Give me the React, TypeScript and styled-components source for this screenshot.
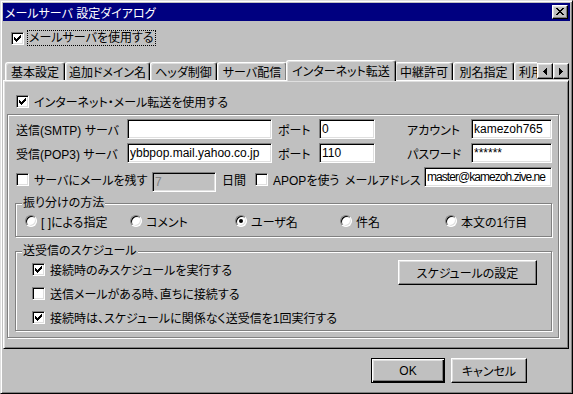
import React from 'react';
import styled, { createGlobalStyle, css } from 'styled-components';

const GlobalStyle = createGlobalStyle`
  html, body {
    margin: 0;
    padding: 0;
    background: #c0c0c0;
    overflow: hidden;
  }
  body {
    font-family: "Liberation Sans", "Noto Sans CJK JP", sans-serif;
    font-size: 12px;
    font-feature-settings: "palt";
    color: #000;
  }
  * {
    box-sizing: border-box;
  }
`;

const raised = css`
  background: #c0c0c0;
  border: 1px solid;
  border-color: #fff #000 #000 #fff;
  box-shadow: inset -1px -1px #808080, inset 1px 1px #dfdfdf;
`;

const Window = styled.div`
  width: 573px;
  height: 394px;
  background: #c0c0c0;
  border: 1px solid;
  border-color: #dfdfdf #000 #000 #dfdfdf;
  box-shadow: inset 1px 1px #fff, inset -1px -1px #808080;
  padding: 2px;
  display: flex;
  flex-direction: column;
`;

const TitleBar = styled.div`
  height: 18px;
  flex: none;
  background: #000080;
  color: #fff;
  display: flex;
  align-items: center;
  justify-content: space-between;
  padding: 0 2px 0 2px;
  white-space: nowrap;
`;

const CloseButton = styled.div`
  ${raised};
  width: 16px;
  height: 14px;
  display: flex;
  align-items: center;
  justify-content: center;
  padding-bottom: 1px;
`;

const TopRow = styled.div`
  display: flex;
  align-items: center;
  height: 14px;
  margin: 10px 0 0 8px;
`;

const FocusLabel = styled.span`
  outline: 1px dotted #000;
  outline-offset: 0;
  margin-left: 4px;
  padding: 0 1px;
  line-height: 14px;
`;

const TabStrip = styled.div`
  position: relative;
  z-index: 1;
  display: flex;
  align-items: flex-end;
  height: 20px;
  margin: 15px 1px 0 0;
  padding-left: 2px;
`;

const TabList = styled.div`
  flex: 1;
  min-width: 0;
  height: 100%;
  display: flex;
  align-items: flex-end;
  overflow-x: clip;
  overflow-y: visible;
`;

const Tab = styled.div<{ $w: number; $active?: boolean }>`
  position: relative;
  flex: none;
  width: ${(p) => p.$w}px;
  height: 18px;
  background: #c0c0c0;
  border-top: 1px solid #fff;
  border-left: 1px solid #fff;
  border-right: 1px solid #000;
  border-radius: 3px 3px 0 0;
  box-shadow: inset -1px 0 #808080, inset 1px 1px #dfdfdf;
  display: flex;
  align-items: center;
  justify-content: center;
  white-space: nowrap;
  overflow: hidden;
  ${(p) => p.$active && css`
    z-index: 2;
    height: 21px;
    margin: 0 -1px -1px;
    padding-bottom: 2px;
  `}
`;

const ScrollArrows = styled.div`
  display: flex;
  align-self: flex-start;
  margin-top: 3px;
  flex: none;
`;

const ArrowButton = styled.div`
  ${raised};
  width: 16px;
  height: 16px;
  display: flex;
  align-items: center;
  justify-content: center;
`;

const Panel = styled.div`
  flex: none;
  height: 269px;
  margin-right: 1px;
  border: 1px solid;
  border-color: #fff #000 #000 #fff;
  box-shadow: inset 1px 1px #dfdfdf, inset -1px -1px #808080;
  padding: 13px 9px 0 3px;
  display: flex;
  flex-direction: column;
`;

const CheckRow = styled.label<{ $ml?: number }>`
  display: flex;
  align-items: center;
  height: 14px;
  gap: 5px;
  margin-left: ${(p) => p.$ml ?? 0}px;
  white-space: nowrap;
`;

const Box = styled.span`
  flex: none;
  width: 13px;
  height: 13px;
  background: #fff;
  border: 1px solid;
  border-color: #808080 #fff #fff #808080;
  box-shadow: inset 1px 1px #000, inset -1px -1px #dfdfdf;
  display: flex;
  align-items: center;
  justify-content: center;
`;

const OuterGroup = styled.div`
  margin-top: 6px;
  border: 1px solid #808080;
  box-shadow: inset 1px 1px #fff, 1px 1px #fff;
  padding: 4px 6px 6px 8px;
  display: flex;
  flex-direction: column;
`;

const Row = styled.div<{ $tall?: boolean }>`
  display: flex;
  align-items: center;
  height: ${(p) => (p.$tall ? 25 : 20)}px;
  & + & {
    margin-top: 4px;
  }
`;

const FieldLabel = styled.span<{ $w: number; $ml?: number }>`
  flex: none;
  width: ${(p) => p.$w}px;
  margin-left: ${(p) => p.$ml ?? 0}px;
  white-space: nowrap;
`;

const TextBox = styled.input<{ $w: number; $align?: string; $tight?: boolean }>`
  flex: none;
  width: ${(p) => p.$w}px;
  height: 20px;
  align-self: ${(p) => p.$align ?? 'center'};
  border: 1px solid;
  border-color: #808080 #fff #fff #808080;
  box-shadow: inset 1px 1px #000, inset -1px -1px #dfdfdf;
  background: #fff;
  color: #000;
  font: inherit;
  font-feature-settings: inherit;
  letter-spacing: ${(p) => (p.$tight ? '-0.95px' : 'normal')};
  padding: 0 2px;
  outline: none;
  &:disabled {
    background: #c0c0c0;
    color: #808080;
  }
`;

const CheckSlot = styled.div<{ $w: number }>`
  flex: none;
  width: ${(p) => p.$w}px;
`;

const Group = styled.fieldset`
  margin: 4px 0 0 -1px;
  padding: 0;
  min-width: 0;
  border: 1px solid #808080;
  box-shadow: inset 1px 1px #fff, 1px 1px #fff;
  & + & {
    margin-top: 7px;
  }
`;

const Legend = styled.legend`
  margin-left: 6px;
  padding: 0 1px;
  line-height: 14px;
  height: 14px;
  background: #c0c0c0;
`;

const RadioGrid = styled.div`
  display: grid;
  grid-template-columns: repeat(5, 105px);
  padding: 4px 0 8px 9px;
`;

const RadioItem = styled.label`
  display: flex;
  align-items: center;
  gap: 4px;
  height: 14px;
  white-space: nowrap;
`;

const Radio = styled.span<{ $on?: boolean }>`
  position: relative;
  flex: none;
  width: 12px;
  height: 12px;
  border-radius: 50%;
  background: #fff;
  border: 1px solid;
  border-color: #808080 #fff #fff #808080;
  box-shadow: inset 1px 1px #000, inset -1px -1px #dfdfdf;
  ${(p) => p.$on && css`
    &::after {
      content: '';
      position: absolute;
      left: 3px;
      top: 3px;
      width: 4px;
      height: 4px;
      border-radius: 50%;
      background: #000;
    }
  `}
`;

const ScheduleBody = styled.div`
  display: flex;
  align-items: flex-start;
  padding: 4px 14px 6px 16px;
`;

const ScheduleChecks = styled.div`
  flex: 1;
  display: flex;
  flex-direction: column;
  gap: 10px;
`;

const Button = styled.button<{ $w: number; $default?: boolean }>`
  ${raised};
  flex: none;
  width: ${(p) => p.$w}px;
  height: 25px;
  padding: 0;
  color: #000;
  font: inherit;
  font-feature-settings: inherit;
  ${(p) => p.$default && css`
    border-color: #000;
    box-shadow: inset 1px 1px #fff, inset -1px -1px #000, inset -2px -2px #808080, inset 2px 2px #dfdfdf;
  `}
`;

const ScheduleButton = styled(Button)`
  margin-top: -2px;
`;

const Footer = styled.div`
  display: flex;
  justify-content: flex-end;
  gap: 6px;
  padding: 9px 43px 0 0;
`;

function Pixels({ rows }: { rows: string[] }) {
  const cells: React.ReactNode[] = [];
  rows.forEach((r, y) => {
    r.split('').forEach((c, x) => {
      if (c === 'X') cells.push(<rect key={`${x}-${y}`} x={x} y={y} width={1} height={1} />);
    });
  });
  return (
    <svg width={rows[0].length} height={rows.length} shapeRendering="crispEdges" fill="#000">
      {cells}
    </svg>
  );
}

const tick = ['......X', '.....XX', 'X...XXX', 'XX.XXX.', 'XXXXX..', '.XXX...', '..X....'];
const cross = ['XX....XX', '.XX..XX.', '..XXXX..', '...XX...', '..XXXX..', '.XX..XX.', 'XX....XX'];
const left = ['...X', '..XX', '.XXX', 'XXXX', '.XXX', '..XX', '...X'];
const right = ['X...', 'XX..', 'XXX.', 'XXXX', 'XXX.', 'XX..', 'X...'];

function Check({ on }: { on?: boolean }) {
  return <Box>{on && <Pixels rows={tick} />}</Box>;
}

const tabs = [
  { label: '基本設定', w: 60 },
  { label: '追加ドメイン名', w: 85 },
  { label: 'ヘッダ制御', w: 67 },
  { label: 'サーバ配信', w: 70 },
  { label: 'インターネット転送', w: 110, active: true },
  { label: '中継許可', w: 58 },
  { label: '別名指定', w: 61 },
  { label: '利用者制限', w: 70 },
];

const sorts = ['[ ]による指定', 'コメント', 'ユーザ名', '件名', '本文の1行目'];

export default function App() {
  return (
    <>
      <GlobalStyle />
      <Window>
        <TitleBar>
          <span>メールサーバ 設定ダイアログ</span>
          <CloseButton><Pixels rows={cross} /></CloseButton>
        </TitleBar>

        <TopRow>
          <Check on />
          <FocusLabel>メールサーバを使用する</FocusLabel>
        </TopRow>

        <TabStrip>
          <TabList>
            {tabs.map((t) => (
              <Tab key={t.label} $w={t.w} $active={t.active}>{t.label}</Tab>
            ))}
          </TabList>
          <ScrollArrows>
            <ArrowButton><Pixels rows={left} /></ArrowButton>
            <ArrowButton><Pixels rows={right} /></ArrowButton>
          </ScrollArrows>
        </TabStrip>

        <Panel>
          <CheckRow $ml={9}>
            <Check on />
            インターネット・メール転送を使用する
          </CheckRow>

          <OuterGroup>
            <Row>
              <FieldLabel $w={111}>送信(SMTP) サーバ</FieldLabel>
              <TextBox $w={145} defaultValue="" />
              <FieldLabel $w={41} $ml={6}>ポート</FieldLabel>
              <TextBox $w={56} defaultValue="0" />
              <FieldLabel $w={64} $ml={32}>アカウント</FieldLabel>
              <TextBox $w={81} defaultValue="kamezoh765" />
            </Row>
            <Row>
              <FieldLabel $w={111}>受信(POP3) サーバ</FieldLabel>
              <TextBox $w={145} defaultValue="ybbpop.mail.yahoo.co.jp" />
              <FieldLabel $w={41} $ml={6}>ポート</FieldLabel>
              <TextBox $w={56} defaultValue="110" />
              <FieldLabel $w={64} $ml={32}>パスワード</FieldLabel>
              <TextBox $w={81} defaultValue="******" />
            </Row>
            <Row $tall>
              <CheckSlot $w={136}>
                <CheckRow>
                  <Check />
                  サーバにメールを残す
                </CheckRow>
              </CheckSlot>
              <TextBox $w={64} $align="flex-end" disabled defaultValue="7" />
              <FieldLabel $w={33} $ml={6}>日間</FieldLabel>
              <CheckSlot $w={90}>
                <CheckRow>
                  <Check />
                  APOPを使う
                </CheckRow>
              </CheckSlot>
              <FieldLabel $w={79}>メールアドレス</FieldLabel>
              <TextBox $w={128} $align="flex-start" $tight defaultValue="master@kamezoh.zive.ne" />
            </Row>

            <Group>
              <Legend>振り分けの方法</Legend>
              <RadioGrid>
                {sorts.map((s, i) => (
                  <RadioItem key={s}>
                    <Radio $on={i === 2} />
                    {s}
                  </RadioItem>
                ))}
              </RadioGrid>
            </Group>

            <Group>
              <Legend>送受信のスケジュール</Legend>
              <ScheduleBody>
                <ScheduleChecks>
                  <CheckRow>
                    <Check on />
                    接続時のみスケジュールを実行する
                  </CheckRow>
                  <CheckRow>
                    <Check />
                    送信メールがある時、直ちに接続する
                  </CheckRow>
                  <CheckRow>
                    <Check on />
                    接続時は、スケジュールに関係なく送受信を1回実行する
                  </CheckRow>
                </ScheduleChecks>
                <ScheduleButton $w={139}>スケジュールの設定</ScheduleButton>
              </ScheduleBody>
            </Group>
          </OuterGroup>
        </Panel>

        <Footer>
          <Button $w={74} $default>OK</Button>
          <Button $w={76}>キャンセル</Button>
        </Footer>
      </Window>
    </>
  );
}
